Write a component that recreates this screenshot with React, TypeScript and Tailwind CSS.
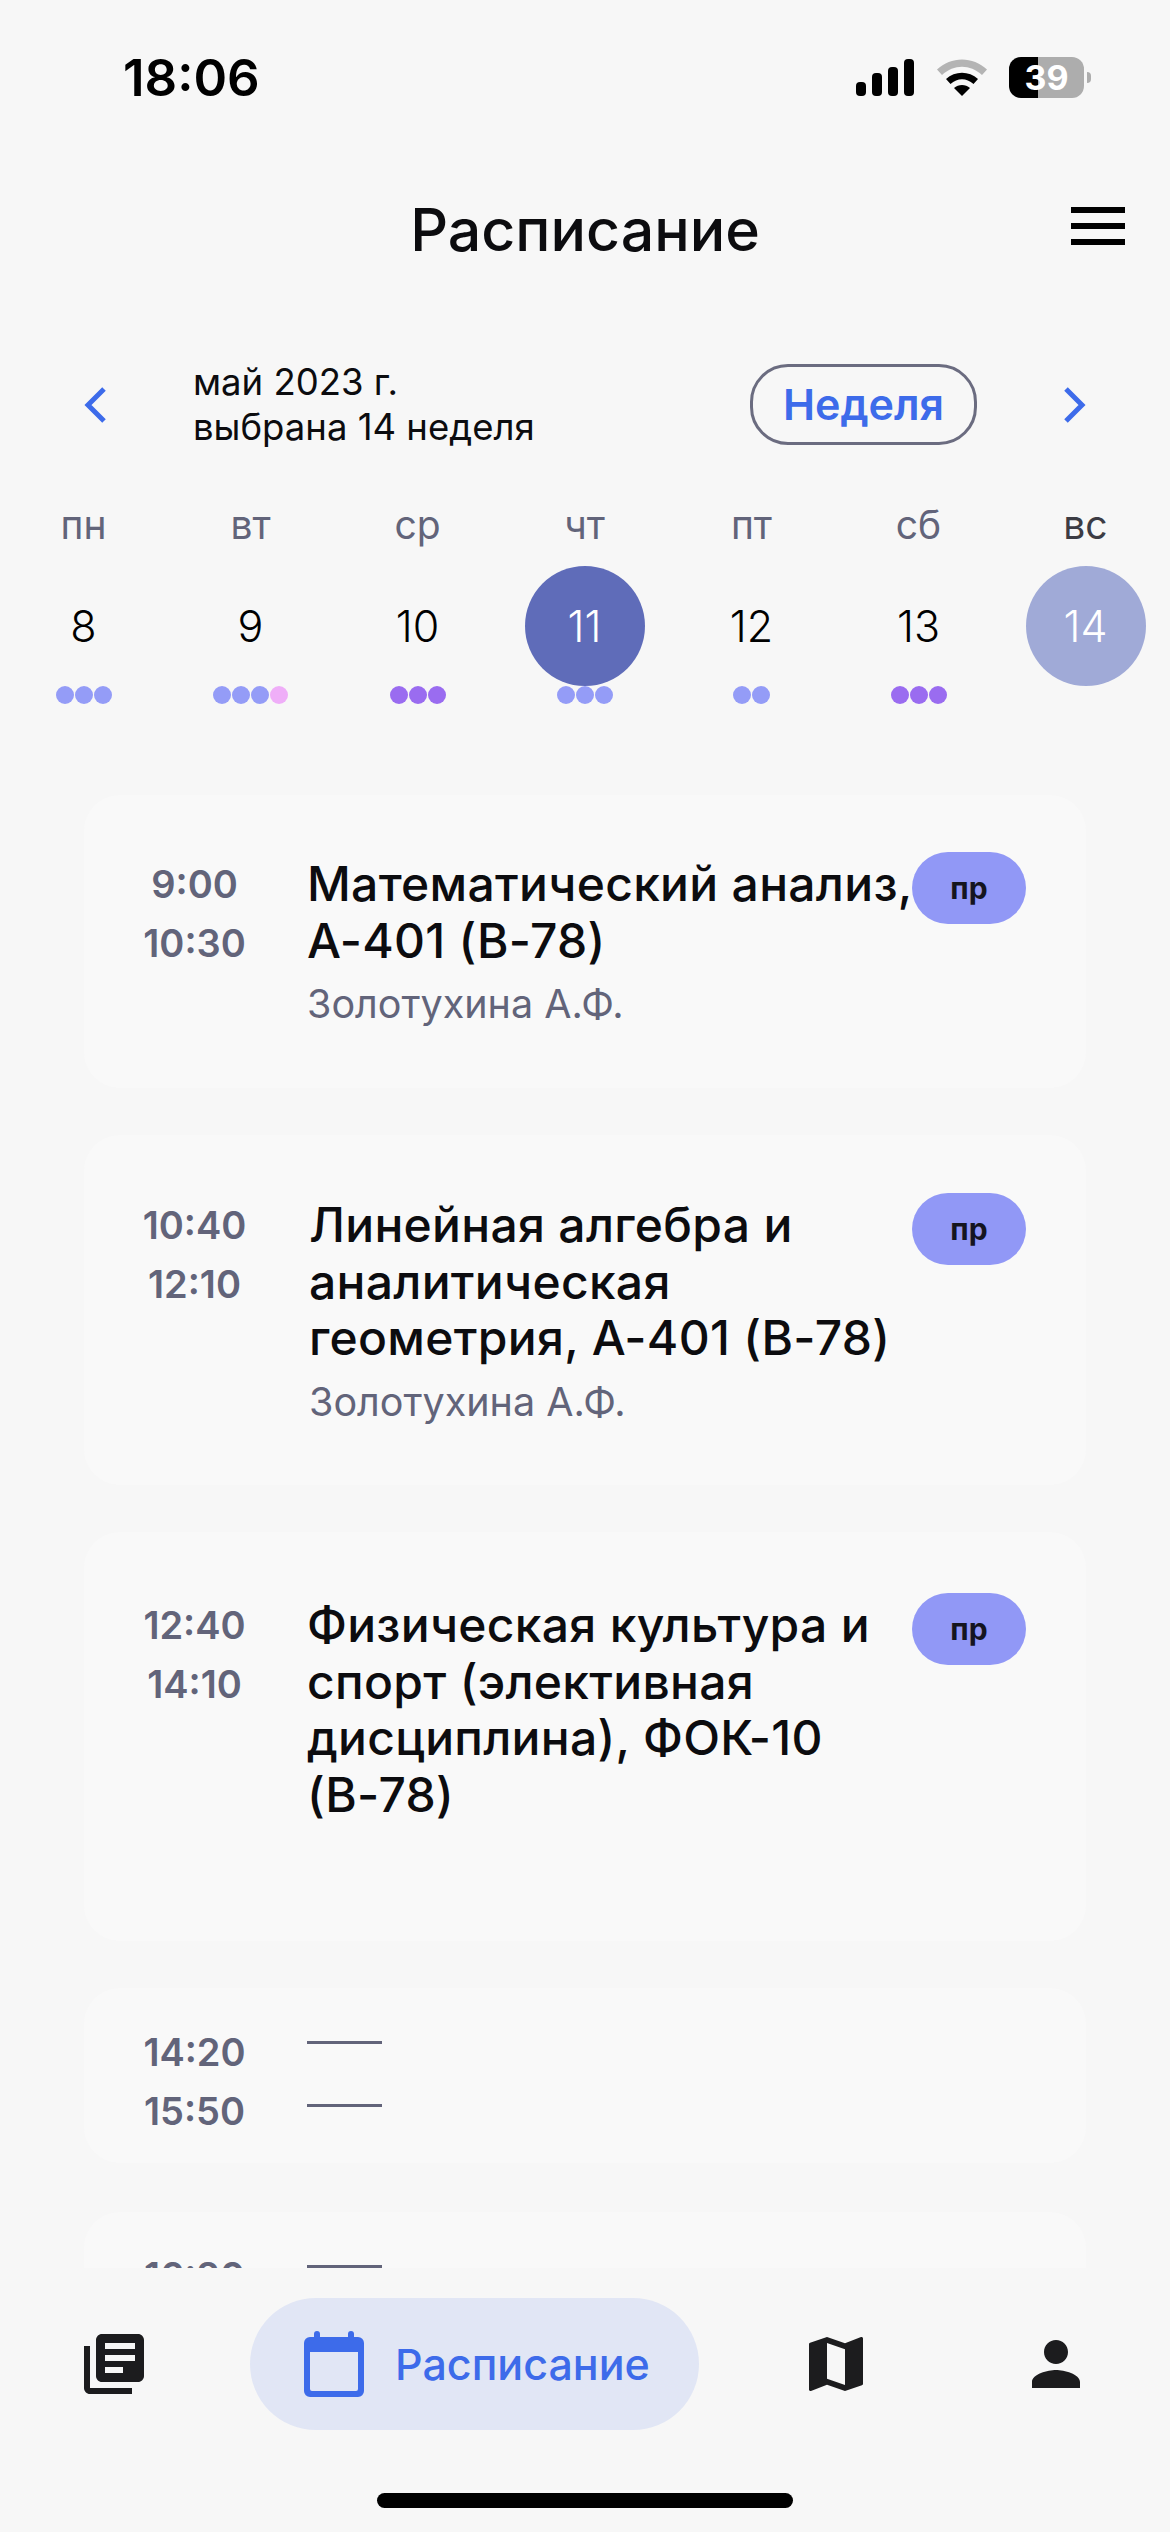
import { MdLibraryBooks, MdMap, MdPerson } from 'react-icons/md'

type Lesson = {
  start: string
  end: string
  title?: string[]
  teacher?: string
  box: string
  titleMargin?: string
}

const weekDays = [
  { label: 'пн', day: 8, dots: ['bg-[#949cf7]', 'bg-[#949cf7]', 'bg-[#949cf7]'] },
  { label: 'вт', day: 9, dots: ['bg-[#949cf7]', 'bg-[#949cf7]', 'bg-[#949cf7]', 'bg-[#efaef8]'] },
  { label: 'ср', day: 10, dots: ['bg-[#9a6cf0]', 'bg-[#9a6cf0]', 'bg-[#9a6cf0]'] },
  { label: 'чт', day: 11, dots: ['bg-[#949cf7]', 'bg-[#949cf7]', 'bg-[#949cf7]'], current: true },
  { label: 'пт', day: 12, dots: ['bg-[#949cf7]', 'bg-[#949cf7]'] },
  { label: 'сб', day: 13, dots: ['bg-[#9a6cf0]', 'bg-[#9a6cf0]', 'bg-[#9a6cf0]'] },
  { label: 'вс', day: 14, dots: [], selected: true },
]

const lessons: Lesson[] = [
  {
    start: '9:00',
    end: '10:30',
    title: ['Математический анализ,', 'А-401 (В-78)'],
    teacher: 'Золотухина А.Ф.',
    box: 'h-[293px] pt-[57px]',
  },
  {
    start: '10:40',
    end: '12:10',
    title: ['Линейная алгебра и', 'аналитическая', 'геометрия, А-401 (В-78)'],
    teacher: 'Золотухина А.Ф.',
    box: 'h-[350px] pt-[58px]',
    titleMargin: 'ml-[52px]',
  },
  {
    start: '12:40',
    end: '14:10',
    title: ['Физическая культура и', 'спорт (элективная', 'дисциплина), ФОК-10', '(В-78)'],
    box: 'h-[409px] pt-[61px]',
  },
  { start: '14:20', end: '15:50', box: 'h-[175px] pt-[35px] mb-[2px]' },
  { start: '16:20', end: '17:50', box: 'h-[175px] pt-[35px]' },
]

function StatusIcons() {
  return (
    <div className="flex items-center">
      <svg width="58" height="37" viewBox="0 0 58 37" fill="#000">
        <rect x="0" y="23" width="10" height="14" rx="4" />
        <rect x="16" y="14" width="10" height="23" rx="4" />
        <rect x="32" y="8" width="10" height="29" rx="4" />
        <rect x="48" y="0" width="10" height="37" rx="4" />
      </svg>
      <svg className="ml-[23px]" width="50" height="37" viewBox="0 0 50 37">
        <path d="M0 10.5 C14 -3 36 -3 50 10.5 L45 16 C33 5 17 5 5 16 Z" fill="#b4b4b4" />
        <path d="M9 20 C18 11.5 32 11.5 41 20 L36.5 25 C29.5 18.5 20.5 18.5 13.5 25 Z" fill="#000" />
        <path d="M17 29 C21.500 25 28.500 25 33 29 L25 37 Z" fill="#000" />
      </svg>
      <div className="ml-[22px] flex h-[41px] w-[75px] items-center justify-center rounded-[12px] bg-[linear-gradient(90deg,#000_0,#000_29px,#adadad_29px,#adadad_100%)] text-[34px] font-bold leading-none text-white">
        39
      </div>
      <div className="ml-[3px] h-[11px] w-[4px] rounded-r-full bg-[#adadad]" />
    </div>
  )
}

function CalendarIcon() {
  return (
    <svg width="60" height="66" viewBox="0 0 60 66" fill="#3d6bea">
      <rect x="10" y="0" width="6" height="10" rx="3" />
      <rect x="44" y="0" width="6" height="10" rx="3" />
      <path
        fillRule="evenodd"
        d="M6 6 H54 A6 6 0 0 1 60 12 V60 A6 6 0 0 1 54 66 H6 A6 6 0 0 1 0 60 V12 A6 6 0 0 1 6 6 Z M6 21 V58 A2 2 0 0 0 8 60 H52 A2 2 0 0 0 54 58 V21 Z"
      />
    </svg>
  )
}

function LessonCard({ lesson }: { lesson: Lesson }) {
  return (
    <div className={`${lesson.box} flex shrink-0 rounded-[36px] bg-[#f9f9f9] pl-[48px] pr-[60px]`}>
      <div
        className={`w-[125px] shrink-0 text-center text-[38px] font-semibold leading-[59px] text-[#62647a] ${
          lesson.title ? 'pt-[3px]' : ''
        }`}
      >
        <div>{lesson.start}</div>
        <div>{lesson.end}</div>
      </div>
      {lesson.title ? (
        <>
          <div className={`min-w-0 flex-1 pt-[4px] ${lesson.titleMargin ?? 'ml-[50px]'}`}>
            <div className="whitespace-nowrap text-[48px] font-medium leading-[56.5px] tracking-[0.3px] text-[#0c0c0f]">
              {lesson.title.map((line) => (
                <div key={line}>{line}</div>
              ))}
            </div>
            {lesson.teacher && (
              <div className="mt-[11px] text-[39.5px] leading-[48px] text-[#62647a]">{lesson.teacher}</div>
            )}
          </div>
          <div className="flex h-[72px] w-[114px] shrink-0 items-center justify-center rounded-full bg-[#9198f6] text-[30px] font-bold text-[#15151f]">
            пр
          </div>
        </>
      ) : (
        <div className="ml-[50px] flex flex-col pt-[18px]">
          <div className="h-[3px] w-[75px] bg-[#62647a]" />
          <div className="mt-[60px] h-[3px] w-[75px] bg-[#62647a]" />
        </div>
      )}
    </div>
  )
}

export default function App() {
  return (
    <div className="flex h-[2532px] w-[1170px] flex-col overflow-hidden bg-[#f7f7f7] font-['Inter',sans-serif]">
      <div className="flex h-[156px] shrink-0 items-start justify-between pl-[123px] pr-[79px] pt-[57px]">
        <div className="text-[51px] font-semibold leading-[41px] text-black">18:06</div>
        <StatusIcons />
      </div>

      <div className="grid h-[146px] shrink-0 grid-cols-[1fr_auto_1fr] items-center">
        <div />
        <div className="text-[59px] font-medium leading-none text-[#0c0c0f]">Расписание</div>
        <div className="mb-[7px] flex flex-col items-end gap-[10px] pr-[45px]">
          <div className="h-[6px] w-[54px] bg-black" />
          <div className="h-[6px] w-[54px] bg-black" />
          <div className="h-[6px] w-[54px] bg-black" />
        </div>
      </div>

      <div className="mt-[62px] flex h-[81px] shrink-0 items-center pl-[84px]">
        <svg width="22" height="36" viewBox="0 0 22 36" fill="none" stroke="#3d6bea" strokeWidth="5">
          <path d="M20 2 L4 18 L20 34" />
        </svg>
        <div className="ml-[87px] w-[557px] text-[36.5px] leading-[45px] text-[#0c0c0f]">
          <div>май 2023 г.</div>
          <div>выбрана 14 неделя</div>
        </div>
        <div className="flex h-[81px] w-[227px] items-center justify-center rounded-[38px] border-[3px] border-[#6b6c80] text-[43px] font-semibold text-[#3d6bea]">
          Неделя
        </div>
        <svg className="ml-[87px]" width="22" height="36" viewBox="0 0 22 36" fill="none" stroke="#3d6bea" strokeWidth="5">
          <path d="M2 2 L18 18 L2 34" />
        </svg>
      </div>

      <div className="mt-[58px] grid w-[1169px] shrink-0 grid-cols-7">
        {weekDays.map((d) => (
          <div key={d.day} className="flex flex-col items-center">
            <div className={`h-[44px] text-[39px] leading-[44px] ${d.selected ? 'text-[#3c3c44]' : 'text-[#62647a]'}`}>
              {d.label}
            </div>
            <div
              className={`mt-[19px] flex h-[120px] w-[120px] items-center justify-center rounded-full text-[43px] font-light ${
                d.current
                  ? 'bg-[#5f6cb9] text-white'
                  : d.selected
                    ? 'bg-[#a0aad7] text-white'
                    : 'text-black'
              }`}
            >
              {d.day}
            </div>
            <div className="flex h-[18px] gap-[1px]">
              {d.dots.map((color, i) => (
                <div key={i} className={`h-[18px] w-[18px] rounded-full ${color}`} />
              ))}
            </div>
          </div>
        ))}
      </div>

      <div className="flex min-h-0 flex-1 flex-col gap-[47px] overflow-hidden px-[84px] pt-[91px]">
        {lessons.map((lesson) => (
          <LessonCard key={lesson.start} lesson={lesson} />
        ))}
      </div>

      <div className="h-[264px] shrink-0 pt-[30px]">
        <div className="flex h-[132px] items-center pl-[78px]">
          <MdLibraryBooks size={72} color="#1c1c1e" />
          <div className="ml-[100px] flex h-[132px] w-[449px] items-center rounded-full bg-[#e1e6f5] pl-[54px]">
            <CalendarIcon />
            <span className="ml-[31px] text-[43px] font-medium text-[#3d6bea]">Расписание</span>
          </div>
          <div className="ml-[101px]">
            <MdMap size={72} color="#1c1c1e" />
          </div>
          <div className="ml-[148px]">
            <MdPerson size={72} color="#1c1c1e" />
          </div>
        </div>
        <div className="mx-auto mt-[63px] h-[15px] w-[416px] rounded-full bg-black" />
      </div>
    </div>
  )
}
